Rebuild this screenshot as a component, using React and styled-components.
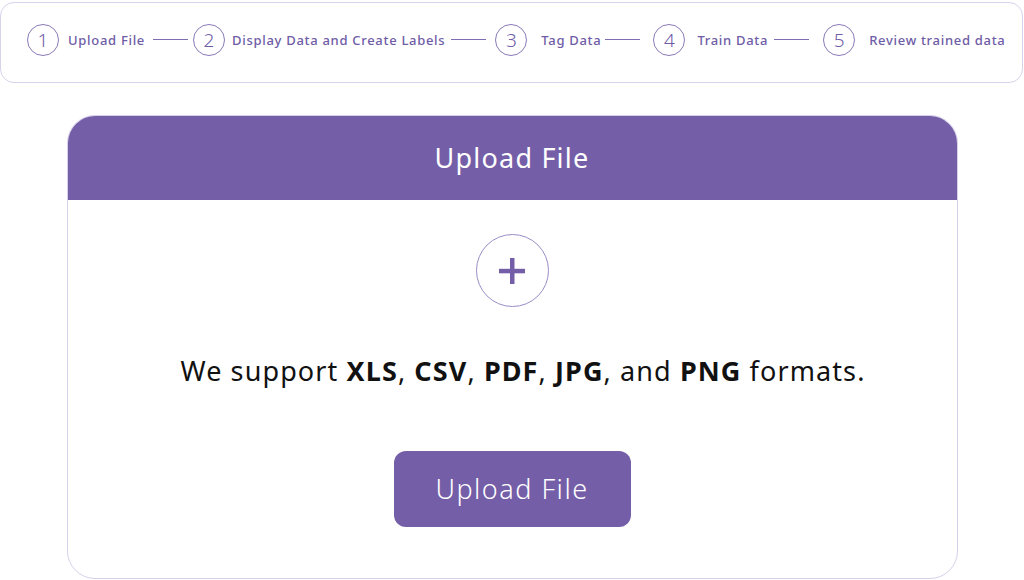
import React from "react";
import styled, { createGlobalStyle } from "styled-components";

const Global = createGlobalStyle`
  html, body { margin: 0; padding: 0; background: #ffffff; }
  body { font-family: "Noto Sans", "Liberation Sans", sans-serif; }
  * { box-sizing: border-box; }
`;

const Page = styled.div`
  width: 1024px;
  height: 580px;
  display: flex;
  flex-direction: column;
  align-items: center;
  padding-top: 2px;
`;

const Stepper = styled.div`
  width: 1023px;
  height: 81px;
  border: 1px solid #d9d2ec;
  border-radius: 14px;
  display: flex;
  align-items: center;
  padding-left: 26px;
  padding-bottom: 6px;
  align-self: flex-start;
`;

const Step = styled.div`
  display: flex;
  align-items: center;
  gap: ${(p) => p.$gap}px;
`;

const Circle = styled.div`
  width: 32px;
  height: 32px;
  border-radius: 50%;
  border: 1px solid #8a7bb8;
  display: flex;
  align-items: center;
  justify-content: center;
  color: #6e5ca6;
  font-size: 19px;
  font-weight: 300;
`;

const Label = styled.span`
  color: #6e5ca6;
  font-size: 13px;
  font-weight: 500;
  letter-spacing: 0.7px;
  white-space: nowrap;
`;

const Connector = styled.div`
  width: 35px;
  height: 1px;
  background: #7e6db2;
  margin: 0 ${(p) => p.$right}px 0 ${(p) => p.$left}px;
`;

const Card = styled.div`
  margin-top: 32px;
  width: 891px;
  height: 464px;
  border: 1px solid #d6cfea;
  border-radius: 28px;
  overflow: hidden;
  display: flex;
  flex-direction: column;
  align-items: center;
`;

const Header = styled.div`
  width: 100%;
  height: 84px;
  background: #745ea8;
  color: #ffffff;
  display: flex;
  align-items: center;
  justify-content: center;
  font-size: 27px;
  font-weight: 400;
  letter-spacing: 1.2px;
  padding-bottom: 2px;
`;

const PlusCircle = styled.div`
  margin-top: 34px;
  width: 73px;
  height: 73px;
  border-radius: 50%;
  border: 1px solid #9a8cc6;
  display: flex;
  align-items: center;
  justify-content: center;
`;

const Support = styled.p`
  margin: 45px 0 0 22px;
  font-size: 27px;
  letter-spacing: 1.1px;
  color: #111111;
  font-weight: 400;
  b { font-weight: 700; }
`;

const Button = styled.button`
  margin-top: 62px;
  width: 237px;
  height: 76px;
  border: none;
  border-radius: 12px;
  background: #745ea8;
  color: #ffffff;
  font-family: "Noto Sans", sans-serif;
  font-size: 27px;
  font-weight: 300;
  letter-spacing: 1.5px;
  padding-bottom: 2px;
`;

const steps = [
  { label: "Upload File", gap: 9, left: 8, right: 5 },
  { label: "Display Data and Create Labels", gap: 7, left: 6, right: 9 },
  { label: "Tag Data", gap: 14, left: 4, right: 13 },
  { label: "Train Data", gap: 12, left: 6, right: 14 },
  { label: "Review trained data", gap: 14 },
];

export default function App() {
  return (
    <>
      <Global />
      <Page>
        <Stepper>
          {steps.map((s, i) => (
            <React.Fragment key={s.label}>
              <Step $gap={s.gap}>
                <Circle>{i + 1}</Circle>
                <Label>{s.label}</Label>
              </Step>
              {i < steps.length - 1 && <Connector $left={s.left} $right={s.right} />}
            </React.Fragment>
          ))}
        </Stepper>
        <Card>
          <Header>Upload File</Header>
          <PlusCircle>
            <svg width="30" height="30" viewBox="0 0 30 30">
              <rect x="13" y="2" width="4.5" height="26" fill="#745ea8" />
              <rect x="2" y="12.8" width="26" height="4.5" fill="#745ea8" />
            </svg>
          </PlusCircle>
          <Support>
            We support <b>XLS</b>, <b>CSV</b>, <b>PDF</b>, <b>JPG</b>, and <b>PNG</b> formats.
          </Support>
          <Button>Upload File</Button>
        </Card>
      </Page>
    </>
  );
}
